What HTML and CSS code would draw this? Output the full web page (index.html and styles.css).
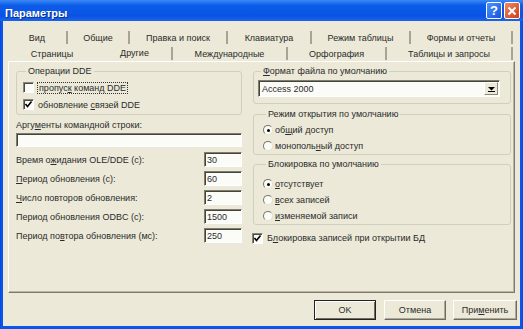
FILE: index.html
```html
<!DOCTYPE html>
<html lang="ru">
<head>
  <meta charset="UTF-8" />
  <title>Параметры</title>
  <link rel="stylesheet" href="styles.css">
</head>
<body>
  <div class="window">
    <div class="titlebar">
      <span class="title">Параметры</span>
      <div class="caption-buttons">
        <span class="cap help">?</span>
        <span class="cap close">
          <svg width="10" height="10" viewBox="0 0 10 10"><path d="M1.5 1.5 L8.5 8.5 M8.5 1.5 L1.5 8.5" stroke="#fff" stroke-width="2"/></svg>
        </span>
      </div>
    </div>

    <div class="frame">
      <div class="tabs">
        <div class="tab-row row1">
          <span class="tab">Вид</span>
          <span class="tab">Общие</span>
          <span class="tab">Правка и поиск</span>
          <span class="tab">Клавиатура</span>
          <span class="tab">Режим таблицы</span>
          <span class="tab">Формы и отчеты</span>
        </div>
        <div class="tab-row row2">
          <span class="tab before-active">Страницы</span>
          <span class="tab active">Другие</span>
          <span class="tab">Международные</span>
          <span class="tab">Орфография</span>
          <span class="tab">Таблицы и запросы</span>
        </div>
      </div>

      <div class="panel">
        <div class="col">
          <fieldset class="group dde">
            <legend>Операции DDE</legend>
            <div class="opt">
              <span class="check"></span>
              <span class="focus">пропус<u>к</u> команд DDE</span>
            </div>
            <div class="opt">
              <span class="check">
                <svg width="9" height="9" viewBox="0 0 9 9"><path d="M1.5 4 L3.5 6.5 L7.5 1.5" fill="none" stroke="#000" stroke-width="1.6"/></svg>
              </span>
              <span>обновление <u>с</u>вязей DDE</span>
            </div>
          </fieldset>

          <div class="args-label">Аргу<u>м</u>енты командной строки:</div>
          <input class="field wide" type="text" value="">

          <div class="num-rows">
            <div class="num-row"><span>Время о<u>ж</u>идания OLE/DDE (с):</span><input class="field short" value="30"></div>
            <div class="num-row"><span><u>П</u>ериод обновления (с):</span><input class="field short" value="60"></div>
            <div class="num-row"><span><u>Ч</u>исло повторов обновления:</span><input class="field short" value="2"></div>
            <div class="num-row"><span>Период обновления ODBC (с):</span><input class="field short" value="1500"></div>
            <div class="num-row"><span>Период по<u>в</u>тора обновления (мс):</span><input class="field short" value="250"></div>
          </div>
        </div>

        <div class="col">
          <fieldset class="group format">
            <legend><u>Ф</u>ормат файла по умолчанию</legend>
            <div class="select">
              <span class="select-value">Access 2000</span>
              <span class="select-arrow">
                <svg width="7" height="6" viewBox="0 0 7 6"><path d="M0 1 H7 L3.5 4.5 Z" fill="#000"/><path d="M0 5.5 H7" stroke="#000" stroke-width="1"/></svg>
              </span>
            </div>
          </fieldset>

          <fieldset class="group radios mode">
            <legend>Режим открытия по умолчанию</legend>
            <div class="opt"><span class="radio on"></span><span>об<u>щ</u>ий доступ</span></div>
            <div class="opt"><span class="radio"></span><span>монополь<u>н</u>ый доступ</span></div>
          </fieldset>

          <fieldset class="group radios lock">
            <legend>Блокировка по умолчанию</legend>
            <div class="opt"><span class="radio on"></span><span><u>о</u>тсутствует</span></div>
            <div class="opt"><span class="radio"></span><span><u>в</u>сех записей</span></div>
            <div class="opt"><span class="radio"></span><span><u>и</u>зменяемой записи</span></div>
          </fieldset>

          <div class="opt lock-check">
            <span class="check">
              <svg width="9" height="9" viewBox="0 0 9 9"><path d="M1.5 4 L3.5 6.5 L7.5 1.5" fill="none" stroke="#000" stroke-width="1.6"/></svg>
            </span>
            <span>Б<u>л</u>окировка записей при открытии БД</span>
          </div>
        </div>
      </div>

      <div class="footer">
        <button class="btn default">OK</button>
        <button class="btn">Отмена</button>
        <button class="btn apply">При<u>м</u>енить</button>
      </div>
    </div>
  </div>
</body>
</html>
```

FILE: styles.css
```css
body { margin: 0; font-family: "Liberation Sans", Arial, sans-serif; font-size: 9px; color: #2b2b2b; }
u { text-decoration-thickness: 1px; text-underline-offset: 1px; }

.window { width: 523px; height: 329px; display: flex; flex-direction: column; background: linear-gradient(90deg, #0842d0, #0a55ec 1px, #0a55ec 522px, #0842d0); }
.titlebar { height: 21px; flex: none; display: flex; align-items: center; justify-content: space-between; padding: 0 3px 0 5px; background: linear-gradient(#3c8af6, #0d5de9 25%, #0953e4 75%, #1a64ec); color: #fff; }
.title { font-weight: bold; font-size: 11px; padding-top: 5px; text-shadow: 1px 1px 0 #0b2f8c; }
.caption-buttons { display: flex; gap: 2px; }
.cap { width: 16px; height: 17px; box-sizing: border-box; border: 1px solid #fff; border-radius: 2px; display: flex; align-items: center; justify-content: center; color: #fff; font: bold 13px "Liberation Sans", Arial, sans-serif; }
.cap.help { background: linear-gradient(135deg, #4d95fb, #1652e0); }
.cap.close { background: linear-gradient(135deg, #ee8a62, #d13c17); }

.frame { flex: 1; margin: 0 3px 3px; background: #ece9d8; display: flex; flex-direction: column; }

.tabs { margin: 10px 0 0 5px; }
.tab-row { display: flex; height: 13px; }
.tab-row + .tab-row { margin-top: 3px; }
.tab { box-sizing: border-box; display: flex; align-items: center; justify-content: center; border-right: 2px solid #a7a496; }
.tab.before-active { border-right-color: transparent; }
.tab.active { padding-bottom: 2px; }
.row1 .tab:nth-child(1) { width: 60px; }
.row1 .tab:nth-child(2) { width: 62px; }
.row1 .tab:nth-child(3) { width: 98px; }
.row1 .tab:nth-child(4) { width: 84px; }
.row1 .tab:nth-child(5) { width: 99px; }
.row1 .tab:nth-child(6) { width: 102px; }
.row2 .tab:nth-child(1) { width: 90px; }
.row2 .tab:nth-child(2) { width: 75px; }
.row2 .tab:nth-child(3) { width: 115px; }
.row2 .tab:nth-child(4) { width: 99px; }
.row2 .tab:nth-child(5) { width: 126px; }

.panel { margin: 1px 5px 0; height: 232px; box-sizing: border-box; border: 1px solid; border-color: #fff #7d7a6c #7d7a6c #fff; box-shadow: inset -1px -1px 0 #b9b6a6; padding: 4px 3px 0 7px; display: grid; grid-template-columns: 226px 258px; column-gap: 11px; align-items: start; }
.col { display: flex; flex-direction: column; }

.group { margin: 0; padding: 0; border: 1px solid #d0d0bf; border-radius: 3px; }
.group legend { padding: 0 2px; margin-left: 3px; line-height: 11px; }
.group.dde { padding: 2px 0 1px 6px; }
.group.format { padding: 3px 10px 6px 4px; }
.group.radios { padding-left: 9px; }
.group.mode { margin-top: 5px; padding-top: 2px; }
.group.lock { margin-top: 4px; padding-top: 6px; }

.opt { display: flex; align-items: center; gap: 4px; }
.dde .opt { height: 17px; }
.radios .opt { height: 16px; gap: 2px; }
.focus { outline: 1px dotted #333; outline-offset: 0; padding: 0 1px; }

.check { width: 11px; height: 11px; box-sizing: border-box; flex: none; display: flex; align-items: center; justify-content: center; border: 1px solid; border-color: #8a8778 #fff #fff #8a8778; box-shadow: inset 1px 1px 0 #4a4a44; background: #fbfbf7; }
.radio { width: 8px; height: 8px; flex: none; border-radius: 50%; border: 1px solid; border-color: #7a776a #e4e1d4 #e4e1d4 #7a776a; background: #fbfbf7; display: flex; align-items: center; justify-content: center; }
.radio.on::after { content: ""; width: 3px; height: 3px; border-radius: 50%; background: #000; }

.field { box-sizing: border-box; margin: 0; padding: 0 2px; border: 1px solid; border-color: #7f7c6e #fff #fff #7f7c6e; box-shadow: inset 1px 1px 0 #44443f; background: #fbfbf7; font: inherit; color: inherit; outline: none; }
.args-label { margin-top: 4px; line-height: 12px; }
.field.wide { width: 226px; height: 14px; margin-top: 2px; }
.num-rows { margin-top: 3px; }
.num-row { height: 19px; display: flex; align-items: center; justify-content: space-between; }
.field.short { width: 38px; height: 15px; }

.select { height: 17px; box-sizing: border-box; display: flex; align-items: center; justify-content: space-between; border: 1px solid; border-color: #7f7c6e #fff #fff #7f7c6e; box-shadow: inset 1px 1px 0 #44443f; background: #fbfbf7; padding: 0 1px 0 3px; }
.select-arrow { width: 14px; height: 13px; box-sizing: border-box; display: flex; align-items: center; justify-content: center; background: #ece9d8; border: 1px solid; border-color: #fff #8d8a7c #8d8a7c #fff; }

.lock-check { margin: 6px 0 0 -1px; height: 14px; }

.footer { display: flex; justify-content: flex-end; gap: 7px; padding: 7px 3px 0 0; }
.btn { width: 62px; height: 20px; box-sizing: border-box; padding: 0; background: #ece9d8; font: inherit; color: inherit; border: 1px solid; border-color: #fff #6f6c60 #6f6c60 #fff; box-shadow: inset -1px -1px 0 #aca899; }
.btn.default { border: 1px solid #222; box-shadow: inset 1px 1px 0 #fff, inset -1px -1px 0 #6f6c60; margin-right: 1px; }
.btn.apply { width: 64px; }
```
